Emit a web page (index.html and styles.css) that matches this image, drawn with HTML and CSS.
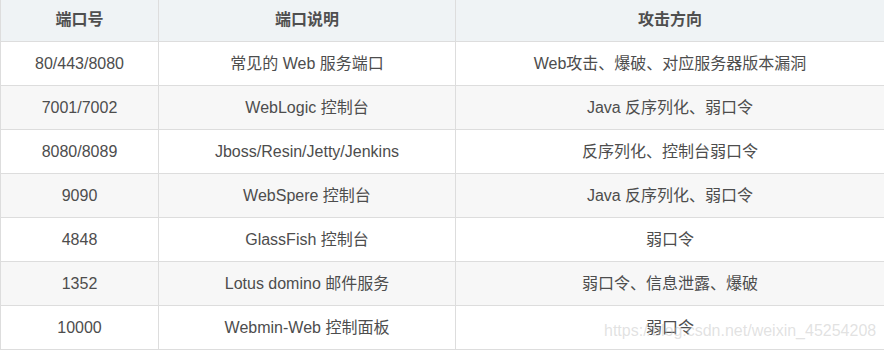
FILE: index.html
```html
<!DOCTYPE html>
<html lang="zh">
<head>
<meta charset="utf-8">
<link rel="stylesheet" href="styles.css">
</head>
<body>
<div class="wrap">
<table class="ports">
<colgroup><col class="c1"><col class="c2"><col class="c3"></colgroup>
<thead>
<tr><th>端口号</th><th>端口说明</th><th>攻击方向</th></tr>
</thead>
<tbody>
<tr><td>80/443/8080</td><td>常见的 Web 服务端口</td><td>Web攻击、爆破、对应服务器版本漏洞</td></tr>
<tr><td>7001/7002</td><td>WebLogic 控制台</td><td>Java 反序列化、弱口令</td></tr>
<tr><td>8080/8089</td><td>Jboss/Resin/Jetty/Jenkins</td><td>反序列化、控制台弱口令</td></tr>
<tr><td>9090</td><td>WebSpere 控制台</td><td>Java 反序列化、弱口令</td></tr>
<tr><td>4848</td><td>GlassFish 控制台</td><td>弱口令</td></tr>
<tr><td>1352</td><td>Lotus domino 邮件服务</td><td>弱口令、信息泄露、爆破</td></tr>
<tr><td>10000</td><td>Webmin-Web 控制面板</td><td>弱口令</td></tr>
</tbody>
</table>
<div class="watermark">https://blog.csdn.net/weixin_45254208</div>
</div>
</body>
</html>
```
FILE: styles.css
```css
html, body {
  margin: 0;
  padding: 0;
  background: #ffffff;
}
.wrap {
  position: relative;
  width: 884px;
  overflow: hidden;
  height: 353px;
}
.ports {
  border-collapse: collapse;
  table-layout: fixed;
  width: 884px;
  margin-top: -3px;
  font-family: "Liberation Sans", Arial, "Noto Sans CJK SC", sans-serif;
  font-size: 16px;
  color: #4d4d4d;
}
.c1 { width: 158px; }
.c2 { width: 297px; }
.c3 { width: 429px; }
.ports th, .ports td {
  border: 1px solid #dddddd;
  height: 44px;
  padding: 0 8px;
  text-align: center;
  vertical-align: middle;
  box-sizing: border-box;
  line-height: 22px;
}
.ports th {
  background: #eff3f5;
  font-weight: bold;
  color: #4f4f4f;
}
.ports tbody tr:nth-child(even) td {
  background: #f7f7f7;
}
.watermark {
  position: absolute;
  left: 604px;
  top: 321px;
  font-family: "Liberation Sans", Arial, sans-serif;
  font-size: 16px;
  line-height: 20px;
  color: rgba(190, 190, 190, 0.45);
  white-space: nowrap;
}
```
